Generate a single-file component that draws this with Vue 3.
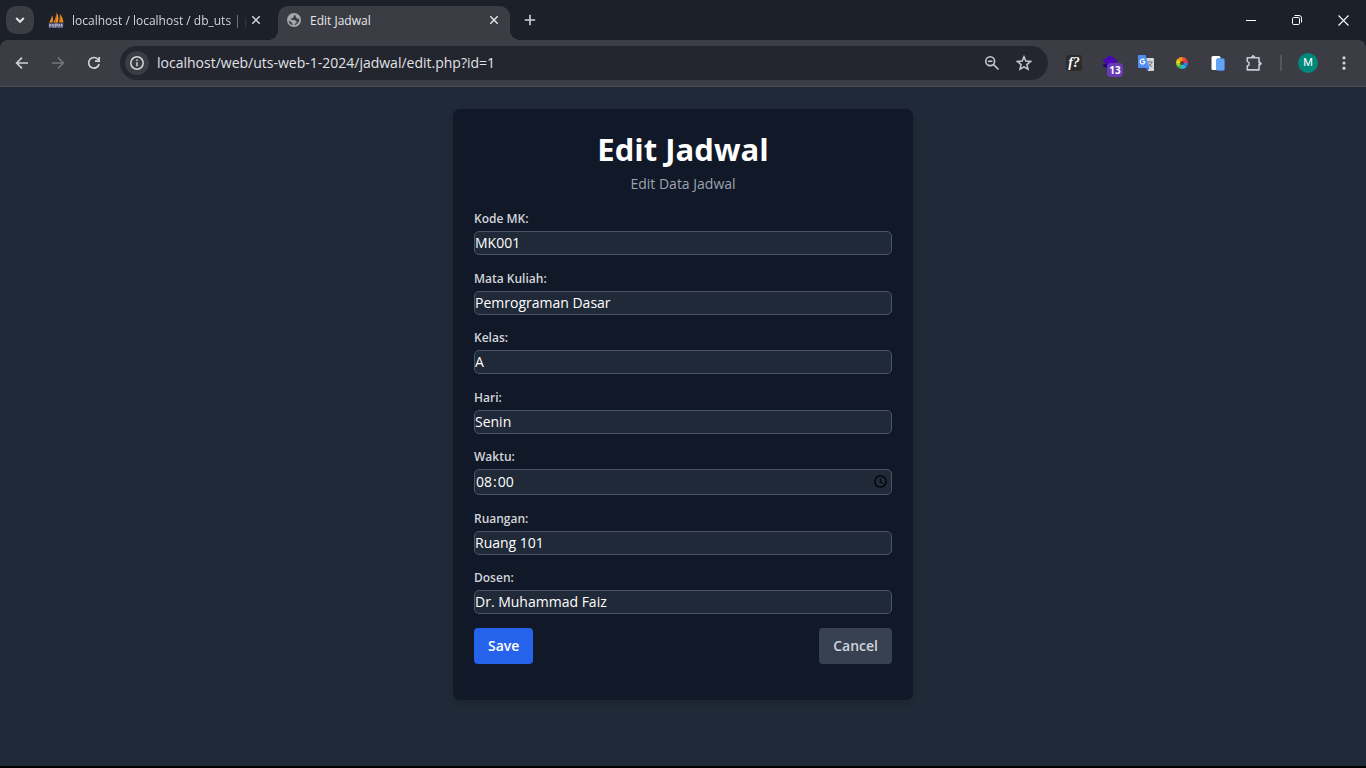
<script setup>
import { reactive } from 'vue'

const fields = reactive([
  { id: 'kode_mk', label: 'Kode MK:', type: 'text', value: 'MK001' },
  { id: 'mata_kuliah', label: 'Mata Kuliah:', type: 'text', value: 'Pemrograman Dasar' },
  { id: 'kelas', label: 'Kelas:', type: 'text', value: 'A' },
  { id: 'hari', label: 'Hari:', type: 'text', value: 'Senin' },
  { id: 'waktu', label: 'Waktu:', type: 'time', value: '08:00' },
  { id: 'ruangan', label: 'Ruangan:', type: 'text', value: 'Ruang 101' },
  { id: 'dosen', label: 'Dosen:', type: 'text', value: 'Dr. Muhammad Faiz' }
])
</script>

<template>
  <div class="window">
    <header class="tabstrip">
      <button class="tab-search" aria-label="Search tabs">
        <svg width="12" height="12" viewBox="0 0 12 12" fill="none" stroke="#e3e4e8" stroke-width="2"><path d="M2.2 4l3.8 3.8L9.8 4" /></svg>
      </button>
      <div class="tab first">
        <svg width="16" height="16" viewBox="0 0 16 16">
          <path d="M1 10.6C2.6 8 3.500 5.800 4 3.200c1.200 2.200 1.300 5 .7 7.400z" fill="#e98a1c" />
          <path d="M5.200 10.600C7.300 7.500 8.200 4 8.600.5c2 3 2.400 6.900 1.200 10.100z" fill="#f79420" />
          <path d="M10.500 10.600c1.300-2.300 1.700-5.500 1.400-8.600 2 2 3.300 5.400 3.600 8.600z" fill="#e98a1c" />
          <path d="M8.600.5c-.3 3.500-.6 7-1.300 10.100M11.900 2v8.600" stroke="#6b4b2a" fill="none" stroke-width=".6" />
          <path d="M.5 11h15l-.8 5H1z" fill="#4b4c72" />
          <path d="M1.800 15.500V12l1.700 2 1.700-2v3.500m2 0V12h2v2H7.500M11 15.500V12l1.500 2 1.500-2v3.500" stroke="#c6c7dc" fill="none" stroke-width=".9" />
        </svg>
        <span class="tab-title faded">localhost / localhost / db_uts | p</span>
        <button class="close" aria-label="Close tab"><svg width="10" height="10" viewBox="0 0 10 10" stroke="#d6d7dc" stroke-width="1.500"><path d="M1.300 1.300l7.400 7.400M8.700 1.300L1.300 8.700" /></svg></button>
      </div>
      <div class="tab active">
        <svg width="14" height="14" viewBox="0 0 14 14">
          <circle cx="7" cy="7" r="7" fill="#a6a8af" />
          <path d="M8.600 1.700c-.5.8-1.500.4-1.900 1.100-.5.800.4 1.500-.4 2.100-.7.500-1.700.1-2.300.7-.5.600.3 1.400 1.200 1.300h2.200c1 0 1 1 1.700 1.300.9.300.9 1.200.3 1.700-.6.500-1.300.4-1.700 1-.2.500-.3.900-.7 1.300A5.400 5.400 0 0 0 12 5.500c-.9 0-1.500.5-2.200.1-.7-.5-.1-1.200-.7-1.700-.6-.6-.8-1.400-.5-2.200zM1.700 7.500l3 2c.6.500.3 1.100.8 1.700v1.100A5.400 5.400 0 0 1 1.700 7.500z" fill="#3b3c44" />
        </svg>
        <span class="tab-title">Edit Jadwal</span>
        <button class="close" aria-label="Close tab"><svg width="10" height="10" viewBox="0 0 10 10" stroke="#e3e4e8" stroke-width="1.500"><path d="M1.300 1.300l7.400 7.400M8.700 1.300L1.300 8.700" /></svg></button>
      </div>
      <button class="new-tab" aria-label="New tab"><svg width="12" height="12" viewBox="0 0 12 12" stroke="#d0d1d8" stroke-width="1.600"><path d="M6 .8v10.400M.8 6h10.400" /></svg></button>
      <div class="window-controls">
        <button aria-label="Minimize"><svg width="10" height="10" viewBox="0 0 10 10" stroke="#fff"><path d="M0 5.500h10" /></svg></button>
        <button aria-label="Restore"><svg width="10" height="10" viewBox="0 0 10 10" fill="none" stroke="#fff"><rect x=".5" y="2.500" width="7" height="7" rx="1.200" /><path d="M2.500 .5h4.500a2.500 2.500 0 0 1 2.500 2.500v4.500" /></svg></button>
        <button aria-label="Close"><svg width="11" height="11" viewBox="0 0 11 11" stroke="#fff" stroke-width="1.100"><path d="M.5.5l10 10M10.500.5l-10 10" /></svg></button>
      </div>
    </header>

    <nav class="toolbar">
      <button class="tool" aria-label="Back"><svg width="16" height="16" viewBox="0 0 16 16" fill="none" stroke="#d0d2d9" stroke-width="1.600"><path d="M14 8H3M8 2.600L2.600 8 8 13.400" /></svg></button>
      <button class="tool" aria-label="Forward"><svg width="16" height="16" viewBox="0 0 16 16" fill="none" stroke="#74767d" stroke-width="1.600"><path d="M2 8h11M8 2.600L13.400 8 8 13.400" /></svg></button>
      <button class="tool" aria-label="Reload"><svg width="16" height="16" viewBox="0 0 16 16" fill="none" stroke="#d0d2d9" stroke-width="1.700"><path d="M12.300 4.800A5.300 5.300 0 1 0 13.100 9M13.200 2v4.200H9" /></svg></button>
      <div class="omnibox">
        <button class="site-info" aria-label="Site information">
          <svg width="16" height="16" viewBox="0 0 16 16" fill="none" stroke="#d6d7dc" stroke-width="1.500"><circle cx="8" cy="8" r="6.200" /><path d="M8 7.200v4M8 4.500v1.500" /></svg>
        </button>
        <input class="url" type="text" aria-label="Address" value="localhost/web/uts-web-1-2024/jadwal/edit.php?id=1" />
        <button class="pill-icon" aria-label="Zoom"><svg width="16" height="16" viewBox="0 0 16 16" fill="none" stroke="#c8cad0" stroke-width="1.600"><circle cx="6.200" cy="6.200" r="4.400" /><path d="M9.500 9.500l5 5M4 6.200h4.400" /></svg></button>
        <button class="pill-icon" aria-label="Bookmark this tab"><svg width="16" height="16" viewBox="0 0 16 16" fill="none" stroke="#c8cad0" stroke-width="1.500"><path d="M8 1.800l1.800 4.300 4.700.4-3.600 3.100 1.100 4.600L8 11.800l-4 2.400 1.100-4.600-3.600-3.100 4.700-.4z" /></svg></button>
      </div>
      <div class="extensions">
        <button class="tool" aria-label="Font finder"><span class="font-ext">f?</span></button>
        <button class="tool layers" aria-label="Layers extension">
          <svg width="16" height="16" viewBox="0 0 16 16"><path d="M0 10.500l8-4.500 8 4.500-8 4.500z" fill="#27067b" /><path d="M0 6l8-6 8 6-8 5z" fill="#4b08b5" /></svg>
          <span class="badge">13</span>
        </button>
        <button class="tool" aria-label="Translate">
          <svg width="16" height="16" viewBox="0 0 16 16">
            <path d="M7 3h8.200c.5 0 .8.300.8.800v11.400c0 .5-.3.800-.8.800H10z" fill="#d5d7d8" />
            <path d="M9.200 7h5.600M12 5.800V7M13.800 7c-.6 2.400-2 4-3.800 5M10.600 8.500c.8 1.500 2 2.700 3.500 3.400" stroke="#6c7d86" fill="none" />
            <path d="M7.500 13h4L9 16z" fill="#3367d6" />
            <path d="M.8 0h6.700l3.800 13H.8A.8.8 0 0 1 0 12.200V.8C0 .3.300 0 .8 0z" fill="#4f8df5" />
            <path d="M6.400 5A2.400 2.400 0 1 0 7 6.700H4.800" fill="none" stroke="#fff" stroke-width="1.200" />
          </svg>
        </button>
        <button class="tool" aria-label="Color picker">
          <svg width="12" height="12" viewBox="0 0 12 12">
            <g transform="translate(6 6)">
              <path d="M0 0V-6A6 6 0 0 1 4.200-4.200z" fill="#f0572b" /><path d="M0 0L4.200-4.200A6 6 0 0 1 6 0z" fill="#e63950" />
              <path d="M0 0H6A6 6 0 0 1 4.200 4.200z" fill="#2387e0" /><path d="M0 0L4.200 4.200A6 6 0 0 1 0 6z" fill="#20b6ee" />
              <path d="M0 0V6A6 6 0 0 1-4.200 4.200z" fill="#36bd68" /><path d="M0 0L-4.200 4.200A6 6 0 0 1-6 0z" fill="#8cd230" />
              <path d="M0 0H-6A6 6 0 0 1-4.200-4.200z" fill="#fbd512" /><path d="M0 0L-4.200-4.200A6 6 0 0 1 0-6z" fill="#fb9c13" />
              <circle r="2" fill="#5b3b38" />
            </g>
          </svg>
        </button>
        <button class="tool" aria-label="Pages extension">
          <svg width="14" height="16" viewBox="0 0 14 16"><rect x=".5" y="1" width="9" height="14" rx="1.500" fill="#fff" /><rect x="5.500" y="3.500" width="8" height="12" rx="1.500" fill="#63a4f8" stroke="#4285d8" stroke-width=".6" /></svg>
        </button>
        <button class="tool" aria-label="Extensions">
          <svg width="18" height="18" viewBox="0 0 18 18" fill="none" stroke="#c8cad3" stroke-width="1.600" stroke-linejoin="round"><path d="M2.300 3.800H14v4.500c2 0 2 2.600 0 2.600v5H2.300v-4.100c2.500-.4 2.500-3.900 0-4.300z" /><path d="M6.500 3.500c0-2.600 3.300-2.600 3.300 0z" fill="#c8cad3" stroke-width="1" /><path d="M14.200 8c2.800 0 2.800 3.200 0 3.200z" fill="#c8cad3" stroke-width="1" /></svg>
        </button>
      </div>
      <span class="divider"></span>
      <button class="tool" aria-label="Profile"><span class="avatar">M</span></button>
      <button class="tool" aria-label="Menu"><svg width="4" height="16" viewBox="0 0 4 16" fill="#d0d2d9"><circle cx="2" cy="2.800" r="1.600" /><circle cx="2" cy="8" r="1.600" /><circle cx="2" cy="13.200" r="1.600" /></svg></button>
    </nav>

    <main class="page">
      <section class="card">
        <h1>Edit Jadwal</h1>
        <p class="subtitle">Edit Data Jadwal</p>
        <form @submit.prevent>
          <div class="fields">
            <div v-for="field in fields" :key="field.id" class="field">
              <label :for="field.id">{{ field.label }}</label>
              <input :id="field.id" v-model="field.value" :type="field.type" />
            </div>
          </div>
          <div class="actions">
            <button class="btn save" type="submit">Save</button>
            <a class="btn cancel" href="#">Cancel</a>
          </div>
        </form>
      </section>
    </main>
  </div>
</template>

<style>
body {
  margin: 0;
  background: #1f2937;
}
</style>

<style scoped>
* {
  box-sizing: border-box;
}
.window {
  display: flex;
  flex-direction: column;
  min-height: 100vh;
  font-family: "Segoe UI", "Open Sans", "Noto Sans", sans-serif;
  background: #1c2028;
}
button {
  border: 0;
  padding: 0;
  background: none;
  font-family: inherit;
  display: flex;
  align-items: center;
  justify-content: center;
}
svg {
  display: block;
  flex: none;
}
.tabstrip {
  display: flex;
  height: 40px;
  padding: 6px 0 0 6px;
}
.tab-search {
  width: 28px;
  height: 28px;
  border-radius: 10px;
  background: #3b3c44;
}
.tab {
  position: relative;
  display: flex;
  align-items: center;
  width: 232px;
  height: 34px;
  padding: 0 8px 6px 9px;
  color: #d3d4d9;
}
.tab.first {
  width: 236px;
  margin: 0 4px;
  padding: 0 10px 6px;
}
.tab.active {
  background: #3b3c44;
  border-radius: 10px 10px 0 0;
  color: #e6e7eb;
}
.tab.active::before,
.tab.active::after {
  content: "";
  position: absolute;
  bottom: 0;
  width: 10px;
  height: 10px;
}
.tab.active::before {
  left: -10px;
  background: radial-gradient(circle at 0 0, transparent 10px, #3b3c44 10px);
}
.tab.active::after {
  right: -10px;
  background: radial-gradient(circle at 100% 0, transparent 10px, #3b3c44 10px);
}
.tab-title {
  flex: 1;
  min-width: 0;
  margin-left: 9px;
  padding-top: 2px;
  white-space: nowrap;
  font-size: 12px;
  line-height: 16px;
}
.tab-title.faded {
  margin-left: 8px;
  mask-image: linear-gradient(to right, #000 156px, transparent 176px);
}
.close {
  flex: none;
  width: 16px;
  height: 16px;
}
.new-tab {
  width: 28px;
  height: 28px;
  margin-left: 6px;
}
.window-controls {
  display: flex;
  margin-left: auto;
}
.window-controls button {
  width: 46px;
  height: 28px;
}
.toolbar {
  display: flex;
  align-items: center;
  height: 47px;
  padding: 0 4px;
  background: #3b3c44;
  border-bottom: 1px solid #4c4d53;
  border-radius: 8px 8px 0 0;
}
.tool {
  width: 36px;
  height: 34px;
  flex: none;
}
.omnibox {
  display: flex;
  align-items: center;
  flex: 1;
  min-width: 0;
  height: 34px;
  margin: 0 8px;
  padding: 0 8px 0 5px;
  border-radius: 17px;
  background: #23262e;
}
.site-info {
  width: 24px;
  height: 24px;
  border-radius: 50%;
  background: #3b3c44;
}
.url {
  flex: 1;
  min-width: 0;
  padding: 0;
  margin-left: 8px;
  border: 0;
  outline: 0;
  background: none;
  color: #e1e2e6;
  font-family: inherit;
  font-size: 14px;
  line-height: 20px;
}
.pill-icon {
  width: 32px;
  height: 32px;
}
.extensions {
  display: flex;
}
.font-ext {
  width: 16px;
  height: 16px;
  border-radius: 2px;
  background: #2c2c2d;
  color: #fff;
  font: italic bold 14px/15px "Liberation Serif", serif;
}
.layers {
  position: relative;
}
.badge {
  position: absolute;
  left: 15px;
  top: 17px;
  width: 16px;
  height: 14px;
  border-radius: 4px;
  background: #673ab7;
  color: #fff;
  font-size: 10px;
  font-weight: 700;
  line-height: 14px;
}
.divider {
  width: 2px;
  height: 16px;
  margin: 0 8px;
  background: #55565e;
}
.avatar {
  width: 20px;
  height: 20px;
  border-radius: 50%;
  background: #00897b;
  color: #fff;
  font-family: Roboto, sans-serif;
  font-size: 11px;
  line-height: 20px;
}
.page {
  flex: 1;
  display: flex;
  justify-content: center;
  align-items: flex-start;
  padding: 22px 16px;
  background: #1f2937;
  border-bottom: 2px solid #000;
}
.card {
  width: 100%;
  max-width: 460px;
  padding: 22px 21px 36px;
  border-radius: 7px;
  background: #111827;
  box-shadow: 0 4px 6px rgba(0, 0, 0, 0.1);
}
h1 {
  margin: 0;
  color: #fff;
  font-size: 31px;
  line-height: 36px;
  font-weight: 700;
  text-align: center;
}
.subtitle {
  margin: 7px 0 15px;
  color: #9ca3af;
  font-size: 14px;
  line-height: 20px;
  text-align: center;
}
.fields {
  display: flex;
  flex-direction: column;
  justify-content: space-between;
  min-height: 405px;
}
.field {
  display: flex;
  flex-direction: column;
  gap: 2px;
}
.field label {
  color: #d1d5db;
  font-size: 12px;
  line-height: 20px;
  font-weight: 600;
}
.field input {
  width: 100%;
  height: 24px;
  padding: 0 0 1px;
  border: 1px solid #4b5563;
  border-radius: 5px;
  background: #1f2937;
  color: #fff;
  font-family: inherit;
  font-size: 14px;
}
.field input[type="time"] {
  height: 26px;
}
.field input::-webkit-datetime-edit-ampm-field {
  display: none;
}
.actions {
  display: flex;
  justify-content: space-between;
  margin-top: 14px;
}
.btn {
  padding: 0 14px;
  border-radius: 4px;
  font-size: 14px;
  line-height: 36px;
  font-weight: 600;
  text-decoration: none;
}
.save {
  background: #2563eb;
  color: #fff;
}
.cancel {
  background: #374151;
  color: #d1d5db;
}
</style>
